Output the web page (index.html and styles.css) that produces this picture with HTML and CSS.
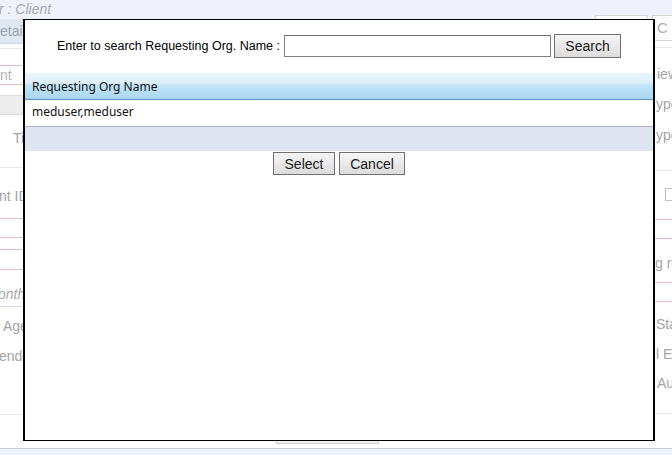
FILE: index.html
```html
<!DOCTYPE html>
<html lang="en">
<head>
	<meta charset="UTF-8">
	<meta name="viewport" content="width=device-width, initial-scale=1.0">
	<title>Requesting Org</title>
	<link rel="stylesheet" href="styles.css">
</head>
<body>
	<div class="page">
		<div class="topbar"><span class="crumb">r : Client</span></div>
		<div class="cols">
			<div class="side left">
				<div class="tab">etail</div>
				<div class="rule r1"></div>
				<div class="field">nt</div>
				<div class="band"></div>
				<div class="lbl l-ti">Ti</div>
				<div class="rule r2"></div>
				<div class="lbl l-id">nt ID</div>
				<div class="red m15"></div>
				<div class="red m18"></div>
				<div class="red m11"></div>
				<div class="red m19"></div>
				<div class="lbl l-mon">onth</div>
				<div class="lbl l-age">Age</div>
				<div class="lbl l-gen">ende</div>
				<div class="rule r3"></div>
			</div>
			<div class="center">
				<div class="tabbox"></div>
				<div class="ghost"></div>
			</div>
			<div class="side right">
				<div class="tab2">C</div>
				<div class="rule q1"></div>
				<div class="lbl q-view">iew</div>
				<div class="lbl q-t1">ype</div>
				<div class="lbl q-t2">ype</div>
				<div class="rule q2"></div>
				<div class="chk"></div>
				<div class="red m18"></div>
				<div class="red m18"></div>
				<div class="lbl q-re">g re</div>
				<div class="red m12"></div>
				<div class="red m18"></div>
				<div class="lbl q-sta">Sta</div>
				<div class="lbl q-en">l En</div>
				<div class="lbl q-aut">Aut</div>
				<div class="rule q3"></div>
			</div>
		</div>
		<div class="foot"></div>
	</div>

	<div class="dialog">
		<div class="srch">
			<span class="srch-lbl">Enter to search Requesting Org. Name :</span>
			<input type="text" class="srch-box">
			<button class="btn btn-search">Search</button>
		</div>
		<div class="grid-head">Requesting Org Name</div>
		<div class="grid-row">meduser,meduser</div>
		<div class="grid-foot"></div>
		<div class="actions">
			<button class="btn btn-select">Select</button>
			<button class="btn btn-cancel">Cancel</button>
		</div>
	</div>
</body>
</html>
```

FILE: styles.css
```css
body {
    margin: 0;
    background-color: #fff;
    font-family: "Liberation Sans", Arial, sans-serif;
    overflow: hidden;
}

/* faded page behind the popup */
div.page {
    width: 672px;
    height: 455px;
    color: #a3a3a3;
    font-size: 14px;
}

div.page div.topbar {
    height: 19px;
    background-color: #eff2fa;
}

div.page span.crumb {
    display: inline-block;
    margin: 1px 0 0 -1px;
    font-style: italic;
    font-size: 14px;
    color: #a6a9b0;
}

div.page div.cols {
    display: flex;
    height: 429px;
}

div.page div.side {
    display: flex;
    flex-direction: column;
    white-space: nowrap;
}

div.page div.left {
    width: 23px;
}

div.page div.right {
    width: 17px;
}

div.page div.center {
    flex: 1;
    display: flex;
    flex-direction: column;
}

div.page div.tab {
    height: 24px;
    line-height: 24px;
    background-color: #dfe7f3;
    border-bottom: 1px solid #cdd6e4;
    color: #9ba3ae;
}

div.page div.rule {
    border-top: 1px solid #e6e6e6;
}

div.page div.r1 { margin-top: 4px; }
div.page div.r2 { margin-top: 22px; }
div.page div.r3 { margin-top: 51px; }

div.page div.field {
    margin-top: 16px;
    height: 18px;
    line-height: 18px;
    border-top: 1px solid #e6bcbc;
    border-bottom: 1px solid #e6bcbc;
    color: #b3b3b3;
}

div.page div.band {
    margin-top: 10px;
    height: 18px;
    background-color: #ededed;
    border-top: 1px solid #dedede;
    border-bottom: 1px solid #dedede;
}

div.page div.lbl {
    line-height: 14px;
    height: 14px;
}

div.page div.l-ti { margin-top: 16px; padding-left: 13px; }
div.page div.l-id { margin-top: 21px; margin-left: -1px; }
div.page div.l-mon {
    margin-top: 17px;
    height: 16px;
    padding-bottom: 3px;
    margin-left: -2px;
    font-style: italic;
    border-bottom: 1px solid #d3dbe8;
    color: #aaa;
}
div.page div.l-age { margin-top: 12px; padding-left: 3px; }
div.page div.l-gen { margin-top: 16px; margin-left: -1px; }

div.page div.red {
    border-top: 1px solid #e6bcbc;
}

div.page div.m11 { margin-top: 11px; }
div.page div.m12 { margin-top: 12px; }
div.page div.m15 { margin-top: 15px; }
div.page div.m18 { margin-top: 18px; }
div.page div.m19 { margin-top: 19px; }

div.page div.tabbox {
    margin: -4px 7px 0 auto;
    width: 51px;
    height: 24px;
    border: 1px solid #d6d6d6;
    background-color: #fbfbfb;
}

div.page div.ghost {
    margin: 379px 0 0 253px;
    width: 101px;
    height: 22px;
    border: 1px solid #cfcfcf;
    background-color: #efefef;
}

div.page div.tab2 {
    margin: -4px 0 0 -3px;
    height: 24px;
    line-height: 24px;
    padding-left: 4px;
    border: 1px solid #d6d6d6;
    border-right: none;
    background-color: #fbfbfb;
    font-size: 15px;
    color: #b0b0b0;
}

div.page div.q1 { margin-top: 6px; }
div.page div.q2 { margin-top: 28px; }
div.page div.q3 { margin-top: 23px; }
div.page div.q-view { margin-top: 19px; padding-left: 2px; }
div.page div.q-t1 { margin-top: 16px; padding-left: 1px; }
div.page div.q-t2 { margin-top: 17px; padding-left: 1px; }
div.page div.q-re { margin-top: 17px; }
div.page div.q-sta { margin-top: 15px; padding-left: 1px; }
div.page div.q-en { margin-top: 16px; padding-left: 1px; }
div.page div.q-aut { margin-top: 15px; padding-left: 2px; }

div.page div.chk {
    margin: 17px 0 0 10px;
    width: 11px;
    height: 11px;
    border: 1px solid #bdbdbd;
    background-color: #fff;
}

div.page div.foot {
    height: 6px;
    border-top: 1px solid #c5ccd8;
    background-color: #eef2fa;
}

/* popup */
div.dialog {
    position: absolute;
    left: 23px;
    top: 19px;
    width: 628px;
    height: 420px;
    border: 1px solid #000;
    border-left-width: 2px;
    border-right-width: 2px;
    background-color: #fff;
    color: #000;
}

div.dialog div.srch {
    display: flex;
    justify-content: center;
    align-items: center;
    padding: 14px 0 15px;
    font-size: 12.5px;
}

div.dialog span.srch-lbl {
    margin-right: 4px;
}

div.dialog input.srch-box {
    box-sizing: border-box;
    width: 267px;
    height: 22px;
    margin: 0 3px 0 0;
    padding: 0 3px;
    border: 1px solid #808080;
    border-top-color: #6c6c6c;
    outline: none;
    font: 13px "Liberation Sans", Arial, sans-serif;
}

div.dialog button.btn {
    box-sizing: border-box;
    padding: 0;
    border: 1px solid #707070;
    border-radius: 0;
    background: linear-gradient(#f5f5f5, #e9e9e9 50%, #dcdcdc);
    color: #1a1a1a;
    font: 14px "Liberation Sans", Arial, sans-serif;
}

div.dialog button.btn-search {
    width: 67px;
    height: 24px;
}

div.dialog div.grid-head {
    height: 21px;
    padding: 5px 0 0 7px;
    line-height: 21px;
    border-bottom: 1px solid #5f93bb;
    background: linear-gradient(#e8f4fc 0%, #dff0fb 35%, #c2e4f7 48%, #a8d7f2 100%);
    font: 12px "Noto Sans", "Open Sans", sans-serif;
    color: #111;
}

div.dialog div.grid-row {
    height: 23px;
    padding: 3px 0 0 7px;
    line-height: 23px;
    border-bottom: 1px solid #aab4c8;
    font: 12px "Noto Sans", "Open Sans", sans-serif;
    color: #111;
}

div.dialog div.grid-foot {
    height: 24px;
    background-color: #dfe4f3;
}

div.dialog div.actions {
    display: flex;
    justify-content: center;
    gap: 4px;
    margin-top: 1px;
}

div.dialog button.btn-select {
    width: 62px;
    height: 23px;
}

div.dialog button.btn-cancel {
    width: 66px;
    height: 23px;
}
```
